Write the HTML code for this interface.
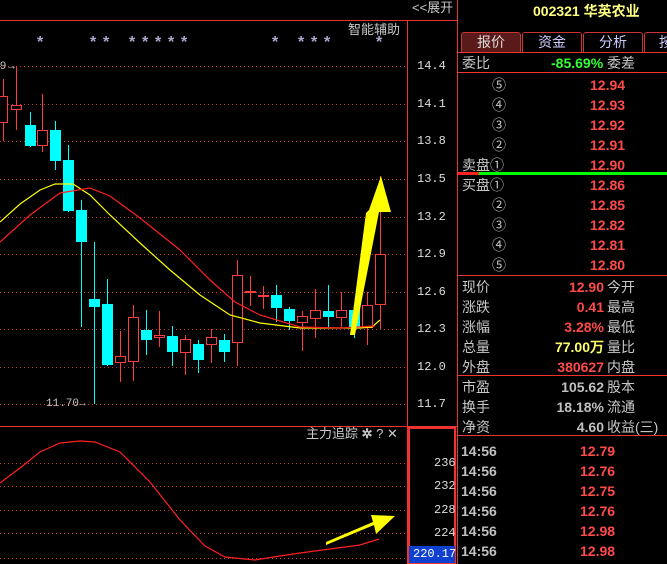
<!DOCTYPE html>
<html><head><meta charset="utf-8"><style>
body{margin:0;width:667px;height:564px;background:#000;overflow:hidden;position:relative;font-family:"Liberation Sans","Noto Sans CJK SC",sans-serif}
.t{position:absolute;white-space:nowrap;font-size:14px;line-height:16px}
.g{color:#c8c8c8}.r{color:#ff4a4a;font-weight:bold;font-family:"Liberation Sans",sans-serif}
.w{color:#c0c0c0;font-weight:bold}
</style></head><body>
<svg width="667" height="564" style="position:absolute;left:0;top:0" shape-rendering="crispEdges">
<g stroke="#c33" stroke-dasharray="1,3" stroke-width="1">
<line x1="0" y1="66.5" x2="406" y2="66.5"/><line x1="0" y1="104.5" x2="406" y2="104.5"/><line x1="0" y1="141.5" x2="406" y2="141.5"/><line x1="0" y1="179.5" x2="406" y2="179.5"/><line x1="0" y1="217.5" x2="406" y2="217.5"/><line x1="0" y1="254.5" x2="406" y2="254.5"/><line x1="0" y1="292.5" x2="406" y2="292.5"/><line x1="0" y1="329.5" x2="406" y2="329.5"/><line x1="0" y1="367.5" x2="406" y2="367.5"/><line x1="0" y1="404.5" x2="406" y2="404.5"/>
<line x1="0" y1="463.5" x2="406" y2="463.5"/><line x1="0" y1="486.5" x2="406" y2="486.5"/><line x1="0" y1="510.5" x2="406" y2="510.5"/><line x1="0" y1="533.5" x2="406" y2="533.5"/><line x1="0" y1="558.5" x2="406" y2="558.5"/>
</g>
<g stroke="#e33" stroke-width="1">
<line x1="0" y1="20.5" x2="457" y2="20.5"/><line x1="407.5" y1="20" x2="407.5" y2="564"/><line x1="457.5" y1="0" x2="457.5" y2="564"/><line x1="0" y1="426.5" x2="457" y2="426.5"/>
</g>
<rect x="409" y="428" width="46" height="135" fill="none" stroke="#e33" stroke-width="2"/>
<rect x="409" y="546" width="46" height="17" fill="#1040d0"/>
<g stroke-width="1">
<g stroke="#ff3c3c">
<line x1="3.5" y1="79" x2="3.5" y2="141"/><line x1="16.5" y1="66" x2="16.5" y2="130"/><line x1="42.5" y1="94" x2="42.5" y2="152"/>
<line x1="120.5" y1="331" x2="120.5" y2="382"/><line x1="133.5" y1="305" x2="133.5" y2="381"/><line x1="159.5" y1="311" x2="159.5" y2="347"/><line x1="185.5" y1="335" x2="185.5" y2="375"/><line x1="211.5" y1="329" x2="211.5" y2="363"/><line x1="237.5" y1="260" x2="237.5" y2="366"/><line x1="250.5" y1="276" x2="250.5" y2="306"/><line x1="263.5" y1="286" x2="263.5" y2="309"/><line x1="302.5" y1="311" x2="302.5" y2="351"/><line x1="315.5" y1="289" x2="315.5" y2="338"/><line x1="341.5" y1="292" x2="341.5" y2="328"/><line x1="367.5" y1="292" x2="367.5" y2="345"/><line x1="380.5" y1="176" x2="380.5" y2="329"/>
</g>
<g stroke="#00ffff">
<line x1="30.5" y1="112" x2="30.5" y2="147"/><line x1="55.5" y1="121" x2="55.5" y2="170"/><line x1="68.5" y1="145" x2="68.5" y2="212"/><line x1="81.5" y1="200" x2="81.5" y2="327"/><line x1="94.5" y1="242" x2="94.5" y2="404"/><line x1="107.5" y1="279" x2="107.5" y2="366"/><line x1="146.5" y1="310" x2="146.5" y2="355"/><line x1="172.5" y1="326" x2="172.5" y2="366"/><line x1="198.5" y1="340" x2="198.5" y2="373"/><line x1="224.5" y1="334" x2="224.5" y2="362"/><line x1="276.5" y1="285" x2="276.5" y2="322"/><line x1="289.5" y1="307" x2="289.5" y2="330"/><line x1="328.5" y1="285" x2="328.5" y2="328"/><line x1="354.5" y1="310" x2="354.5" y2="338"/>
</g>
<g fill="#000" stroke="#ff3c3c">
<rect x="-2.5" y="96.5" width="10" height="26"/><rect x="11.5" y="105.5" width="10" height="4"/><rect x="37.5" y="130.5" width="10" height="15"/>
<rect x="115.5" y="356.5" width="10" height="6"/><rect x="128.5" y="317.5" width="10" height="44"/><rect x="154.5" y="335.5" width="10" height="2"/><rect x="180.5" y="339.5" width="10" height="13"/><rect x="206.5" y="337.5" width="10" height="7"/><rect x="232.5" y="275.5" width="10" height="67"/><rect x="245.5" y="291.5" width="10" height="1"/><rect x="258.5" y="295.5" width="10" height="1"/><rect x="297.5" y="316.5" width="10" height="6"/><rect x="310.5" y="310.5" width="10" height="8"/><rect x="336.5" y="310.5" width="10" height="7"/><rect x="362.5" y="305.5" width="10" height="22"/><rect x="375.5" y="254.5" width="10" height="50"/>
</g>
<g fill="#00ffff">
<rect x="25" y="125" width="11" height="21"/><rect x="50" y="130" width="11" height="31"/><rect x="63" y="160" width="11" height="51"/><rect x="76" y="210" width="11" height="32"/><rect x="89" y="299" width="11" height="8"/><rect x="102" y="304" width="11" height="61"/><rect x="141" y="330" width="11" height="10"/><rect x="167" y="336" width="11" height="16"/><rect x="193" y="344" width="11" height="16"/><rect x="219" y="340" width="11" height="12"/><rect x="271" y="295" width="11" height="13"/><rect x="284" y="309" width="11" height="12"/><rect x="323" y="311" width="11" height="6"/><rect x="349" y="310" width="11" height="17"/>
</g>
</g>
<g fill="none" stroke-width="1.2" shape-rendering="auto">
<polyline stroke="#ffff00" points="0,222 20,204 40,190 55,184 73,184 90,195 110,215 140,243 170,270 200,295 230,315 260,323 300,328 360,328 372,327 380,320"/>
<polyline stroke="#ff2020" points="0,242 30,215 60,193 90,188 110,196 140,218 180,250 210,280 235,302 260,315 300,327 340,328 375,326"/>
<polyline stroke="#ff2020" points="0,483 20,468 40,452 60,443 80,441 95,442 120,452 150,482 180,520 205,546 225,557 255,560 280,556 300,553 330,549 360,545 379,539"/>
<polygon fill="#ffff00" stroke="none" points="350,335 366,213 369,210 381,176 391,212 379,212 355,335"/>
<polygon fill="#ffff00" stroke="none" points="326,545 374,525 376,534 395,516 371,515 373,522 326,542"/>
</g>
</svg>
<div class="t" style="left:0;top:35px;width:400px;color:#aac;font-size:16px;font-weight:bold">
<span style="position:absolute;left:37px">*</span><span style="position:absolute;left:90px">*</span><span style="position:absolute;left:103px">*</span><span style="position:absolute;left:129px">*</span><span style="position:absolute;left:142px">*</span><span style="position:absolute;left:155px">*</span><span style="position:absolute;left:168px">*</span><span style="position:absolute;left:181px">*</span><span style="position:absolute;left:272px">*</span><span style="position:absolute;left:298px">*</span><span style="position:absolute;left:311px">*</span><span style="position:absolute;left:324px">*</span><span style="position:absolute;left:376px">*</span></div>
<div class="t g" style="left:412px;top:0;font-size:13px">&lt;&lt;展开</div>
<div class="t g" style="left:348px;top:22px;font-size:13px">智能辅助</div>
<div class="t g" style="left:0;top:58px;font-size:11px">9→</div>
<div class="t g" style="left:46px;top:396px;font-size:11px;font-family:'Liberation Mono',monospace">11.70→</div>
<div class="t" style="left:417px;top:0;color:#ddd;font-size:12px;font-family:'Liberation Mono',monospace;line-height:14px">
<div style="position:absolute;top:59px">14.4</div><div style="position:absolute;top:97px">14.1</div><div style="position:absolute;top:134px">13.8</div><div style="position:absolute;top:172px">13.5</div><div style="position:absolute;top:210px">13.2</div><div style="position:absolute;top:247px">12.9</div><div style="position:absolute;top:285px">12.6</div><div style="position:absolute;top:322px">12.3</div><div style="position:absolute;top:360px">12.0</div><div style="position:absolute;top:397px">11.7</div>
<div style="position:absolute;top:456px;left:17px">236</div><div style="position:absolute;top:479px;left:17px">232</div><div style="position:absolute;top:503px;left:17px">228</div><div style="position:absolute;top:526px;left:17px">224</div><div style="position:absolute;top:547px;left:-4px;color:#fff">220.17</div></div>
<div class="t g" style="left:306px;top:426px;font-size:13px">主力追踪 <b>✲</b> ? ✕</div>
<div class="t" style="left:533px;top:3px;color:#ffff80;font-weight:bold;font-size:14px">002321 华英农业</div>
<div style="position:absolute;left:461px;top:32px;width:58px;height:19px;background:#5a1a1a;border:1px solid #c33;border-bottom:none;border-radius:3px 3px 0 0;color:#ddd;font-size:14px;text-align:center;line-height:19px">报价</div>
<div style="position:absolute;left:522px;top:32px;width:58px;height:19px;border:1px solid #c33;border-bottom:none;border-radius:3px 3px 0 0;color:#ccf;font-size:14px;text-align:center;line-height:19px">资金</div>
<div style="position:absolute;left:583px;top:32px;width:58px;height:19px;border:1px solid #c33;border-bottom:none;border-radius:3px 3px 0 0;color:#ccf;font-size:14px;text-align:center;line-height:19px">分析</div>
<div style="position:absolute;left:644px;top:32px;width:40px;height:19px;border:1px solid #c33;border-bottom:none;border-radius:3px 0 0 0;color:#ccf;font-size:14px;line-height:19px;padding-left:14px">按</div>
<div style="position:absolute;left:458px;top:52px;width:209px;height:1px;background:#e33"></div>
<div style="position:absolute;left:458px;top:72px;width:209px;height:1px;background:#e33"></div>
<div style="position:absolute;left:458px;top:275px;width:209px;height:1px;background:#e33"></div>
<div style="position:absolute;left:458px;top:375px;width:209px;height:1px;background:#e33"></div>
<div style="position:absolute;left:458px;top:435px;width:209px;height:1px;background:#e33"></div>
<div style="position:absolute;left:458px;top:172px;width:21px;height:3px;background:#f22"></div>
<div style="position:absolute;left:479px;top:172px;width:188px;height:3px;background:#0f0"></div>
<div class="t g" style="left:462px;top:55px">委比</div>
<div class="t" style="left:551px;top:55px;color:#3f3;font-weight:bold">-85.69%</div>
<div class="t g" style="left:607px;top:55px">委差</div>
<div class="t g" style="left:462px;top:75px;line-height:20px">
<div style="padding-left:30px">⑤</div><div style="padding-left:30px">④</div><div style="padding-left:30px">③</div><div style="padding-left:30px">②</div><div>卖盘①</div><div>买盘①</div><div style="padding-left:30px">②</div><div style="padding-left:30px">③</div><div style="padding-left:30px">④</div><div style="padding-left:30px">⑤</div></div>
<div class="t r" style="left:590px;top:75px;line-height:20px">12.94<br>12.93<br>12.92<br>12.91<br>12.90<br>12.86<br>12.85<br>12.82<br>12.81<br>12.80</div>
<div class="t g" style="left:462px;top:277px;line-height:20px">现价<br>涨跌<br>涨幅<br>总量<br>外盘</div>
<div class="t g" style="left:607px;top:277px;line-height:20px">今开<br>最高<br>最低<br>量比<br>内盘</div>
<div class="t r" style="left:500px;top:277px;line-height:20px;width:104px;text-align:right">12.90<br>0.41<br>3.28%<br><span style="color:#ff6">77.00万</span><br>380627</div>
<div class="t g" style="left:462px;top:377px;line-height:20px">市盈<br>换手<br>净资</div>
<div class="t g" style="left:607px;top:377px;line-height:20px">股本<br>流通<br>收益(三)</div>
<div class="t w" style="left:500px;top:377px;line-height:20px;width:104px;text-align:right">105.62<br>18.18%<br>4.60</div>
<div class="t w" style="left:461px;top:441px;line-height:20px">14:56<br>14:56<br>14:56<br>14:56<br>14:56<br>14:56</div>
<div class="t r" style="left:580px;top:441px;line-height:20px">12.79<br>12.76<br>12.75<br>12.76<br>12.98<br>12.98</div>
</body></html>
